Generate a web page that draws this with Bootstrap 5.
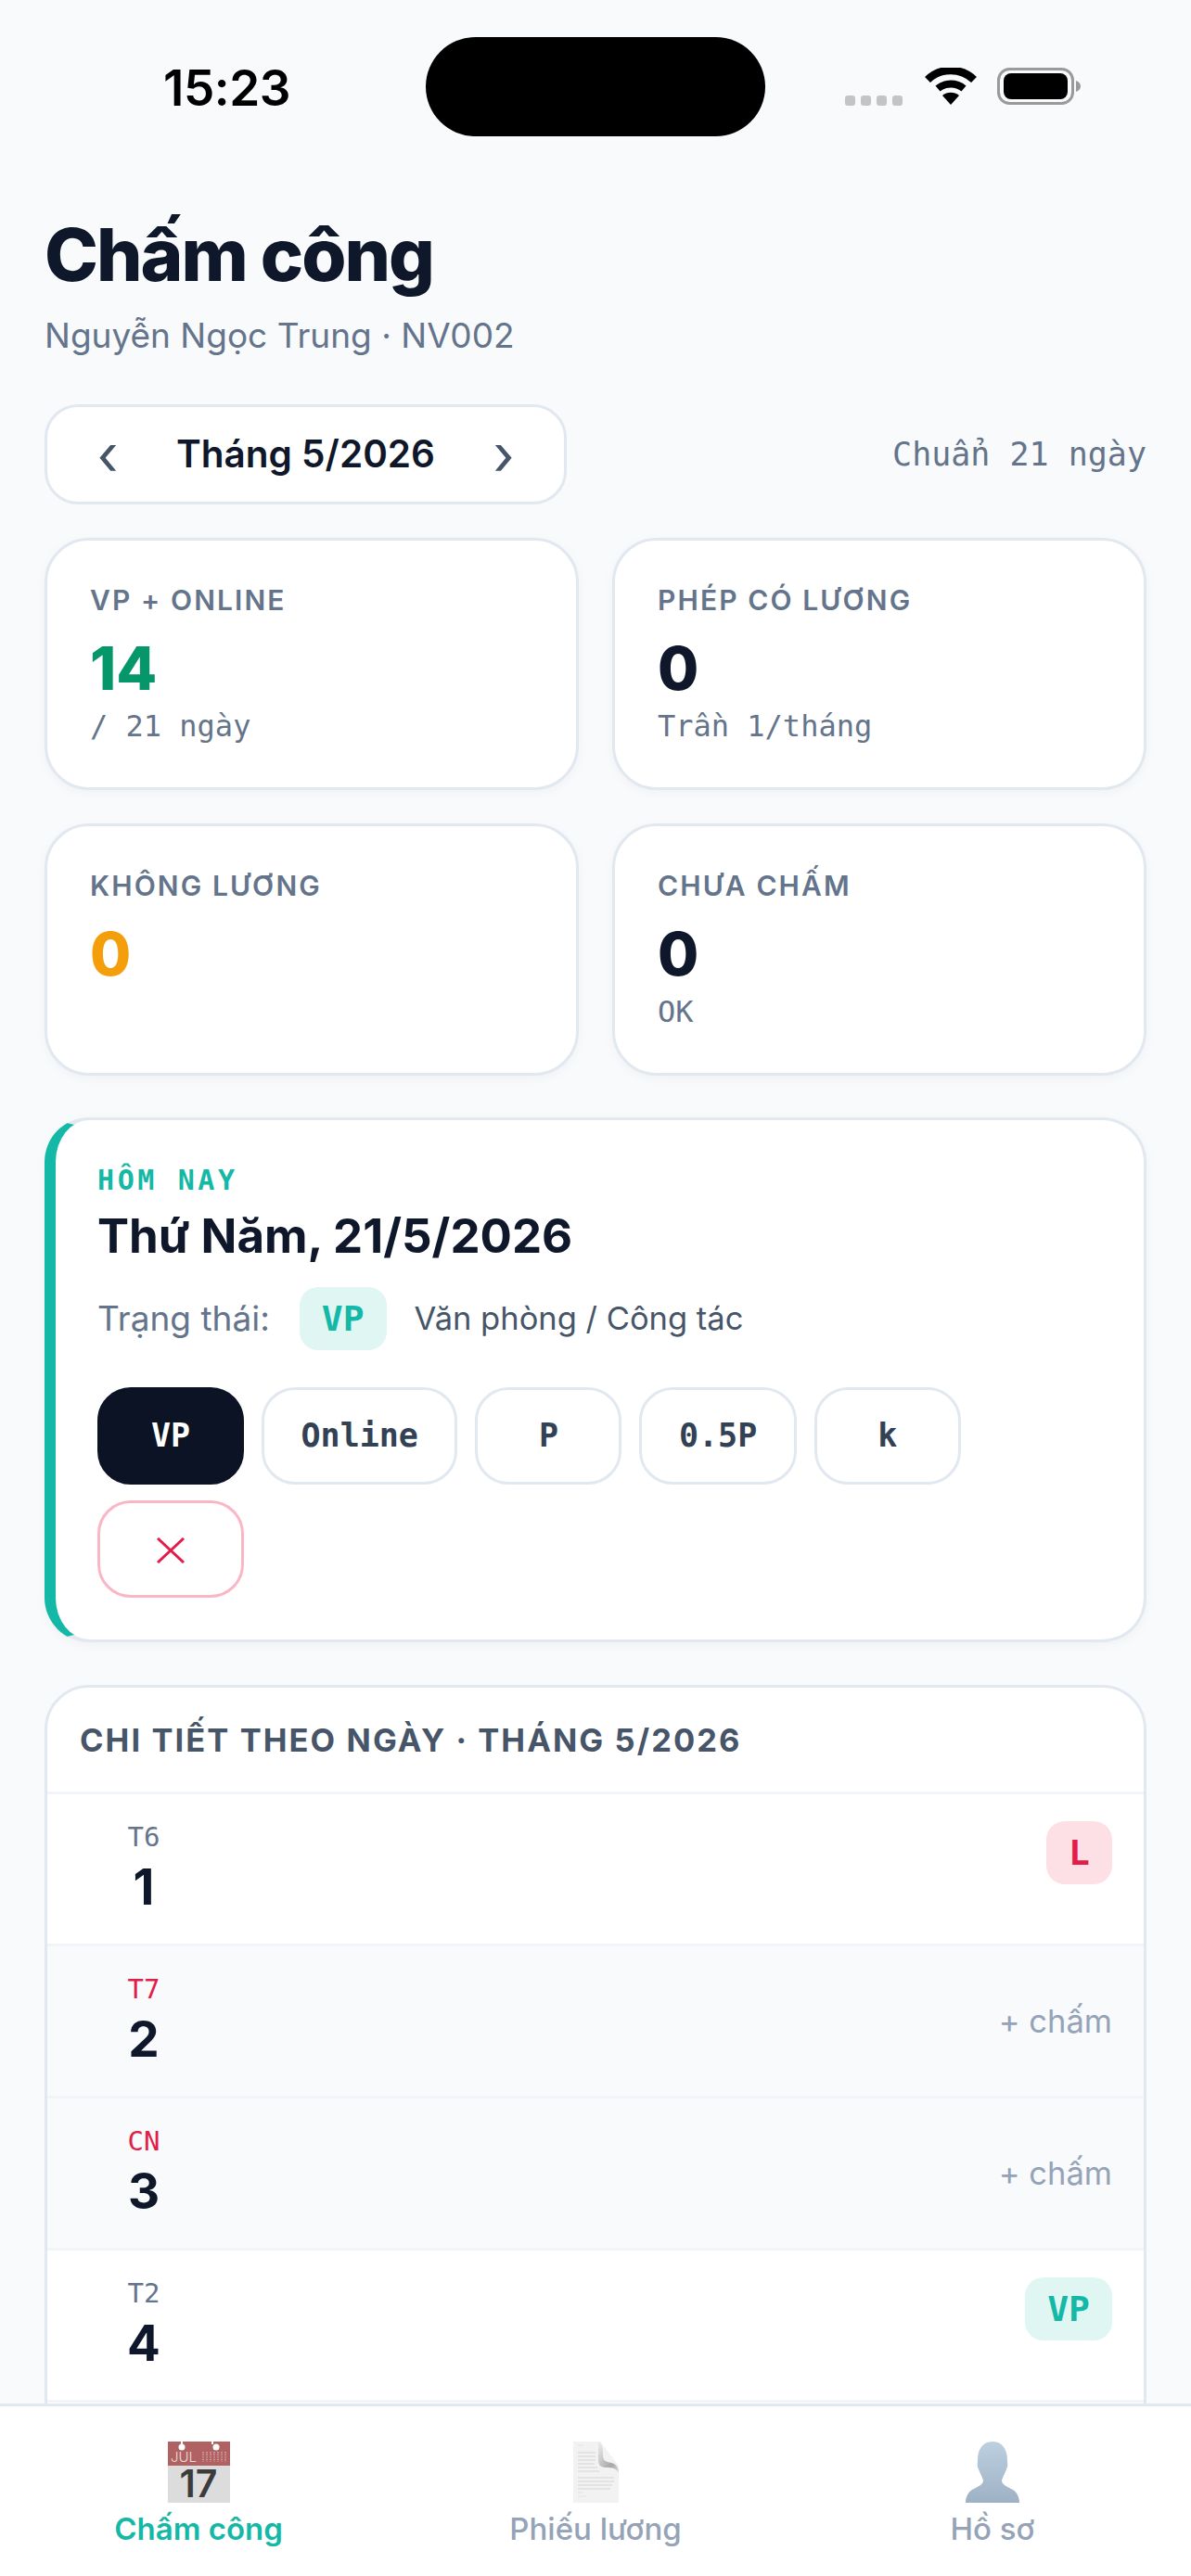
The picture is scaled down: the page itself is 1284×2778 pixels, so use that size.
<!DOCTYPE html>
<html lang="vi">
<head>
    <meta charset="UTF-8">
    <title>Chấm công</title>
    <link href="https://cdn.jsdelivr.net/npm/bootstrap@5.3.3/dist/css/bootstrap.min.css" rel="stylesheet">
    <script src="https://cdn.jsdelivr.net/npm/bootstrap@5.3.3/dist/js/bootstrap.bundle.min.js"></script>
    <style>
        body {
            background: #f8fafc;
            color: #0f172a;
            font-family: Inter, "Noto Sans", sans-serif;
        }
        .app-shell { height: 100vh; overflow: hidden; }
        .mono { font-family: "DejaVu Sans Mono", monospace; }

        /* status bar */
        .status-bar { height: 147px; padding-top: 40px; }
        .status-time { width: 459px; padding-left: 176px; font-size: 53px; font-weight: 600; line-height: 110px; letter-spacing: -.5px; color: #000; }
        .island { width: 366px; height: 107px; background: #000; border-radius: 54px; }
        .status-icons { padding: 33px 0 0 86px; gap: 24px; }
        .signal-dots { gap: 6px; padding-top: 30px; }
        .signal-dots span { width: 11px; height: 11px; border-radius: 3px; background: #c4c4c6; }
        .batt-icon { margin-left: -2px; }

        /* heading */
        .page-head { padding: 80px 48px 0; }
        .page-title { font-size: 78px; font-weight: 800; letter-spacing: -2px; line-height: 96px; margin: 0; }
        .page-sub { font-size: 37px; color: #64748b; line-height: 48px; margin: 15px 0 0; }
        .month-row { margin-top: 50px; }
        .month-nav { width: 563px; height: 108px; background: #fff; border: 3px solid #e2e8f0; border-radius: 36px; padding: 0 40px; }
        .month-nav button { background: none; border: 0; padding: 0; color: #475569; font-size: 60px; line-height: 1; width: 50px; }
        .month-nav strong { font-size: 40.5px; font-weight: 600; }
        .month-std { font-size: 35px; color: #64748b; }

        /* stat cards */
        .stat-wrap { padding: 36px 48px 0; }
        .stat-row { --bs-gutter-x: 36px; --bs-gutter-y: 36px; }
        .stat-card { height: 272px; border: 3px solid #e2e8f0; border-radius: 48px; padding: 44px 46px; box-shadow: 0 3px 12px rgba(15, 23, 42, .04); }
        .stat-label { font-size: 30px; font-weight: 600; letter-spacing: 2.1px; color: #64748b; line-height: 40px; }
        .stat-value { font-size: 64px; font-weight: 800; line-height: 80px; margin-top: 13.5px; }
        .stat-note { font-size: 32px; color: #64748b; line-height: 40px; margin-top: 2.5px; }
        .tone-green { color: #059669; }
        .tone-amber { color: #f59e0b; }

        /* today card */
        .today-card { margin: 45px 48px 0; height: 566px; border: 3px solid #e2e8f0; border-left: 12px solid #14b8a6; border-radius: 48px; padding: 47px 45px; box-shadow: 0 3px 12px rgba(15, 23, 42, .04); }
        .today-tag { font-size: 30px; font-weight: 700; letter-spacing: 3.6px; color: #14b8a6; line-height: 36px; }
        .today-date { font-size: 51px; font-weight: 700; line-height: 66px; margin-top: 8.5px; }
        .today-status { margin-top: 22px; font-size: 37px; height: 68px; }
        .today-status .muted-label { color: #64748b; }
        .today-status .desc { color: #475569; margin-left: 30px; font-size: 34.5px; }
        .status-pill { display: inline-block; font-family: "DejaVu Sans Mono", monospace; font-weight: 700; font-size: 38px; line-height: 68px; height: 68px; padding: 0 24px; border-radius: 20px; }
        .pill-vp { background: #dff6f2; color: #14b8a6; }
        .pill-l { background: #fce0e6; color: #e11d48; }
        .status-pill-gap { margin-left: 32px; }
        .mark-btns { margin-top: 40px; gap: 17px 19px; }
        .mark-btn { min-width: 158px; height: 105px; padding: 0 39.5px; background: #fff; border: 3px solid #e2e8f0; border-radius: 36px; font-family: "DejaVu Sans Mono", monospace; font-size: 35px; font-weight: 700; color: #334155; }
        .mark-btn.is-on { background: #0b1324; border-color: #0b1324; color: #fff; }
        .mark-btn.is-del { border-color: #fbb6c6; }

        /* day list */
        .day-card { margin: 46px 48px 0; border: 3px solid #e2e8f0; border-radius: 48px; overflow: hidden; }
        .day-head { height: 115px; padding: 2px 35px 0; border-bottom: 3px solid #f1f5f9; font-size: 34.5px; font-weight: 700; letter-spacing: 2.07px; color: #475569; }
        .day-row { height: 164px; padding: 28.5px 34px 0 69px; border-bottom: 3px solid #f1f5f9; background: #fff; }
        .day-row.is-off { background: #f8fafc; }
        .day-col { width: 70px; text-align: center; }
        .day-name { font-size: 29px; line-height: 34px; color: #64748b; }
        .day-name.is-red { color: #e11d48; }
        .day-num { font-size: 53px; font-weight: 700; line-height: 66px; margin-top: 4.5px; }
        .day-add { font-size: 34.5px; color: #94a3b8; align-self: center; margin-top: -28.5px; }

        /* bottom nav */
        .tab-bar { height: 186px; background: #fff; border-top: 3px solid #e2e8f0; }
        .tab-item { flex: 1 1 0; padding-top: 38px; color: #94a3b8; font-size: 33px; font-weight: 500; text-decoration: none; }
        .tab-item.is-on { color: #14b8a6; font-weight: 600; }
        .tab-item svg { display: block; height: 66px; margin-bottom: 4px; overflow: visible; }
    </style>
</head>
<body>
<div class="app-shell position-relative">

    <div class="status-bar d-flex align-items-start">
        <div class="status-time">15:23</div>
        <div class="island"></div>
        <div class="status-icons d-flex align-items-start">
            <div class="signal-dots d-flex"><span></span><span></span><span></span><span></span></div>
            <svg width="56" height="40" viewBox="0 0 56 40">
                <path d="M3 13 A36 36 0 0 1 53 13" fill="none" stroke="#000" stroke-width="8.5"/>
                <path d="M14 22.5 A22 22 0 0 1 42 22.5" fill="none" stroke="#000" stroke-width="8"/>
                <path d="M19 30 A14 14 0 0 1 37 30 L28 40 Z" fill="#000"/>
            </svg>
            <svg class="batt-icon" width="90" height="40" viewBox="0 0 90 40">
                <rect x="1.5" y="1.5" width="80" height="37" rx="12" fill="none" stroke="#9a9a9c" stroke-width="3"/>
                <rect x="7" y="6" width="69" height="28" rx="8" fill="#000"/>
                <path d="M85 14 C88 15 90 17 90 20 C90 23 88 25 85 26 Z" fill="#9a9a9c"/>
            </svg>
        </div>
    </div>

    <div class="page-head">
        <h1 class="page-title">Chấm công</h1>
        <p class="page-sub">Nguyễn Ngọc Trung · NV002</p>
        <div class="month-row d-flex justify-content-between align-items-center">
            <div class="month-nav d-flex justify-content-between align-items-center">
                <button type="button">‹</button>
                <strong>Tháng 5/2026</strong>
                <button type="button">›</button>
            </div>
            <span class="month-std mono">Chuẩn 21 ngày</span>
        </div>
    </div>

    <div class="stat-wrap">
        <div class="row row-cols-2 stat-row">
            <div class="col"><div class="card stat-card">
                <div class="stat-label">VP + ONLINE</div>
                <div class="stat-value tone-green">14</div>
                <div class="stat-note mono">/ 21 ngày</div>
            </div></div>
            <div class="col"><div class="card stat-card">
                <div class="stat-label">PHÉP CÓ LƯƠNG</div>
                <div class="stat-value">0</div>
                <div class="stat-note mono">Trần 1/tháng</div>
            </div></div>
            <div class="col"><div class="card stat-card">
                <div class="stat-label">KHÔNG LƯƠNG</div>
                <div class="stat-value tone-amber">0</div>
            </div></div>
            <div class="col"><div class="card stat-card">
                <div class="stat-label">CHƯA CHẤM</div>
                <div class="stat-value">0</div>
                <div class="stat-note mono">OK</div>
            </div></div>
        </div>
    </div>

    <div class="card today-card">
        <div class="today-tag mono">HÔM NAY</div>
        <div class="today-date">Thứ Năm, 21/5/2026</div>
        <div class="today-status d-flex align-items-center">
            <span class="muted-label">Trạng thái:</span>
            <span class="status-pill pill-vp status-pill-gap">VP</span>
            <span class="desc">Văn phòng / Công tác</span>
        </div>
        <div class="mark-btns d-flex flex-wrap">
            <button type="button" class="mark-btn is-on">VP</button>
            <button type="button" class="mark-btn">Online</button>
            <button type="button" class="mark-btn">P</button>
            <button type="button" class="mark-btn">0.5P</button>
            <button type="button" class="mark-btn">k</button>
            <button type="button" class="mark-btn is-del" aria-label="Xoá">
                <svg width="30" height="28" viewBox="0 0 30 28"><path d="M1 1L29 27M29 1L1 27" stroke="#e11d48" stroke-width="3" fill="none"/></svg>
            </button>
        </div>
    </div>

    <div class="card day-card">
        <div class="day-head d-flex align-items-center">CHI TIẾT THEO NGÀY · THÁNG 5/2026</div>
        <div class="day-row d-flex justify-content-between align-items-start">
            <div class="day-col"><div class="day-name mono">T6</div><div class="day-num">1</div></div>
            <span class="status-pill pill-l">L</span>
        </div>
        <div class="day-row is-off d-flex justify-content-between align-items-start">
            <div class="day-col"><div class="day-name mono is-red">T7</div><div class="day-num">2</div></div>
            <span class="day-add">+ chấm</span>
        </div>
        <div class="day-row is-off d-flex justify-content-between align-items-start">
            <div class="day-col"><div class="day-name mono is-red">CN</div><div class="day-num">3</div></div>
            <span class="day-add">+ chấm</span>
        </div>
        <div class="day-row d-flex justify-content-between align-items-start">
            <div class="day-col"><div class="day-name mono">T2</div><div class="day-num">4</div></div>
            <span class="status-pill pill-vp">VP</span>
        </div>
        <div class="day-row d-flex justify-content-between align-items-start">
            <div class="day-col"><div class="day-name mono">T3</div><div class="day-num">5</div></div>
            <span class="status-pill pill-vp">VP</span>
        </div>
    </div>

    <nav class="tab-bar d-flex position-absolute bottom-0 start-0 end-0">
        <a class="tab-item is-on d-flex flex-column align-items-center" href="#">
            <svg width="67" height="66" viewBox="0 0 67 66">
                <rect width="67" height="66" fill="#dcdcdc"/>
                <rect width="67" height="26" fill="#b06262"/>
                <circle cx="15" cy="6" r="3.5" fill="#fff"/><rect x="14" y="0" width="2" height="5" fill="#fff"/>
                <circle cx="52" cy="6" r="3.5" fill="#fff"/><rect x="47" y="0" width="2" height="3" fill="#fff"/>
                <text x="3" y="22" font-family="Inter, sans-serif" font-size="15" font-weight="300" fill="#eedcdc">JUL</text>
                <path d="M38 11v11M42 11v11M46 11v11M50 11v11M54 11v11M58 11v11M62 11v11" stroke="#d9aeae" stroke-width="1.4" stroke-dasharray="1.4 1.2"/>
                <text x="33" y="60" text-anchor="middle" font-family="Inter, sans-serif" font-size="41" fill="#3c3c3c">17</text>
            </svg>
            Chấm công
        </a>
        <a class="tab-item d-flex flex-column align-items-center" href="#">
            <svg width="49" height="66" viewBox="0 0 49 66">
                <defs><linearGradient id="foldShade" x1="0" y1="0" x2="1" y2="1"><stop offset="0" stop-color="#eee"/><stop offset=".7" stop-color="#a8a8a8"/><stop offset="1" stop-color="#dcdcdc"/></linearGradient></defs>
                <path d="M0 0H29L49 26V66H0Z" fill="#f2f2f2"/>
                <path d="M27 0C31 1 32 8 32 15C32 21 36 22 41 23C46 24 49 28 49 34C47 29 42 28 36 28C30 28 27 26 27 20Z" fill="url(#foldShade)"/>
                <path d="M5 12H24M5 16H24M5 20H24M5 24H23M5 28H26M5 32H28M5 39H44M5 43H44M5 47H42M5 51H40" stroke="#dedede" stroke-width="1.4"/>
                <path d="M5 4H11M5 55H11M5 59H14" stroke="#e2e2e2" stroke-width="1.2"/>
            </svg>
            Phiếu lương
        </a>
        <a class="tab-item d-flex flex-column align-items-center" href="#">
            <svg width="58" height="66" viewBox="0 0 58 66">
                <defs><linearGradient id="personFill" x1="0" y1="0" x2="0" y2="1"><stop offset="0" stop-color="#bcd0e0"/><stop offset="1" stop-color="#9fb1c5"/></linearGradient></defs>
                <path d="M29 0C40 0 45 9 45 20C45 24 46 26 44 30C42 35 40 38 39 42C39 47 46 49 51 52C55 54 58 60 58 66H0C0 60 3 54 7 52C12 49 19 47 19 42C18 38 16 35 14 30C12 26 13 24 13 20C13 9 18 0 29 0Z" fill="url(#personFill)"/>
            </svg>
            Hồ sơ
        </a>
    </nav>
</div>
</body>
</html>
